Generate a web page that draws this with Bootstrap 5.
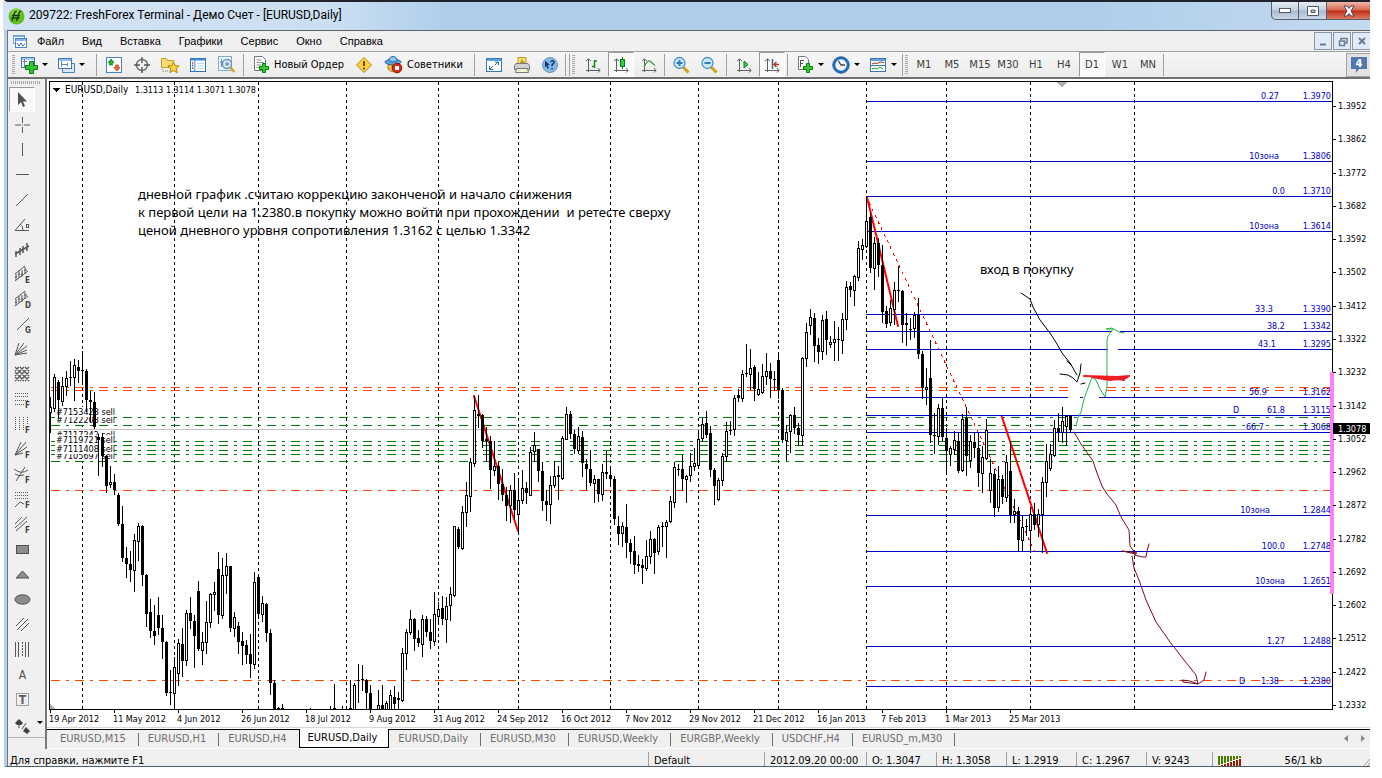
<!DOCTYPE html>
<html lang="ru">
<head>
<meta charset="utf-8">
<meta name="viewport" content="width=device-width, initial-scale=1">
<title>209722: FreshForex Terminal - Демо Счет - [EURUSD,Daily]</title>
<link href="https://cdn.jsdelivr.net/npm/bootstrap@5.3.0/dist/css/bootstrap.min.css" rel="stylesheet">
<style>
  :root { --face:#f0f0f0; --ui:"DejaVu Sans Condensed","DejaVu Sans",sans-serif; }
  body { background:#fff; font-family:var(--ui); font-size:11px; line-height:16px; color:#000; }
  .terminal { margin:0 12px 0 4px; border-top:2px solid #22222c; border-bottom:1px solid #4a5c6c; border-left:3px solid #b2d0ec; background:var(--face); }
  .inner { border-left:1px solid #6a7886; }
  .titlebar { height:28px; margin-left:-4px; padding-left:5px; background:linear-gradient(90deg,#d3e3f4 0,#cbdff2 330px,#b0ceeb 440px,#b0ceeb 80%,#c4daf0 100%); font:12px/27px Roboto,sans-serif; }
  .capbtn { height:18px; width:28px; border:1px solid #56606e; border-top:0; border-left-width:0; border-radius:0; background:linear-gradient(#e4ecf4,#c2d0de 48%,#a9bccf 52%,#c6d8ea); }
  .capbtn:first-child { border-left-width:1px; border-bottom-left-radius:5px; }
  .capbtn.quit { width:43px; border-right:0; background:linear-gradient(#efb6a8,#d8674f 48%,#bf2f16 52%,#dc7a62); }
  .menubar { height:21px; border-top:1px solid #5f6468; }
  .menu-items { margin-left:9px; gap:18px; }
  .menu-items .btn { font:11px/20px "Liberation Sans",sans-serif; padding:0; border:0; border-radius:0; color:#000; }
  .mdibtn { width:18px; height:18px; padding:0 0 0 2px; border:1px solid #8f979e; border-radius:0; background:#dfebf8; line-height:0; }
  .toolbar { height:28px; border-top:1px solid #a0a0a0; border-bottom:2px solid #707070; background:linear-gradient(#f6f6f6,#ececec); }
  .toolbar .btn, .sidebar .btn { padding:0; border:1px solid transparent; border-radius:0; font:11px/16px var(--ui); color:#000; }
  .tool { width:28px; height:25px; }
  .tool-drop { width:37px; height:25px; }
  .tool-text { height:25px; }
  .toolbar .btn.on, .sidebar .btn.on { border-color:#9a9a9a #fff #fff #9a9a9a; background:#f9f9f9; margin:0 1px; width:26px; }
  .toolbar .btn.frame { font-size:10px; color:#404040; font-family:"DejaVu Sans",sans-serif; }
  .rule { width:7px; height:22px; background:linear-gradient(#a0a0a0,#a0a0a0) 3px 0/1px 100% no-repeat; }
  .rule.slim { width:4px; background-position:1px 0; }
  .rule.wide { width:12px; background-position:6px 0; }
  .grip { width:3px; height:20px; background:repeating-linear-gradient(#a8a8a8 0 1px,transparent 1px 2px); }
  .caret { width:0; height:0; border:3px solid transparent; border-top-color:#000; border-bottom:0; }
  .toolbar .btn.news { width:24px; height:24px; border:1px solid #a4a4a4; border-right:0; background:#e2e2e2; }
  .sidebar { width:39px; border-right:2px solid #787878; }
  .sidebar .tool { width:26px; height:25px; margin-left:1px; }
  .sidegrip { height:3px; margin:2px 4px 3px 3px; background:repeating-linear-gradient(90deg,#a8a8a8 0 1px,transparent 1px 2px); }
  .chart { display:block; width:100%; height:auto; background:#fff; shape-rendering:crispEdges; }
  .chart text { font:9px var(--ui); }
  .chart .sym { font-size:10px; }
  .chart .memo { font:13px "Noto Sans",sans-serif; }
  .chart .ink { fill:none; shape-rendering:auto; stroke-linejoin:round; stroke-linecap:round; }
  .sheets { height:20px; border-top:1px solid #000; border-bottom:1px solid #fff; padding-left:4px; }
  .sheets a { color:#6e6e6e; text-decoration:none; line-height:12px; padding:0 12px 0 9px; border-right:1px solid #6e6e6e; margin-top:3px; height:13px; white-space:nowrap; }
  .sheets a.current { color:#000; background:#fff; border:1px solid #000; border-top:0; margin:-1px 0 0 -1px; height:19px; line-height:18px; padding:0 11px 0 8px; }
  .sheets a.before { border-right-color:transparent; }
  .status { height:17px; line-height:18px; padding-top:3px; overflow:hidden; white-space:nowrap; }
  .status > div { border-left:1px solid #a0a0a0; padding-left:5px; height:15px; flex:none; }
  .status > div:first-child { border:0; padding-left:2px; flex:1 1 0; min-width:0; }
  svg.ico { display:block; }
  .c-m { width:116px } .c-l { width:102px } .c-s { width:70px } .c-n { width:66px } .c-e { width:158px }
</style>
</head>
<body>
<main class="terminal">
  <header class="titlebar d-flex align-items-start">
    <svg class="ico align-self-center" width="17" height="17" viewBox="0 0 17 17"><circle cx="8.500" cy="8.500" r="8" fill="#5fbf1c"/><circle cx="8" cy="5" r="5" fill="#9be04e" opacity=".6"/><path d="M4 13 6.500 5q.6-2 2.200-1.500M8.500 13 11 5q.6-2 2.200-1.500M4 7.500h8M3.500 10h8" stroke="#173d07" stroke-width="1.400" fill="none"/></svg>
    <span class="ms-1">209722: FreshForex Terminal - Демо Счет - [EURUSD,Daily]</span>
    <div class="ms-auto d-flex">
      <button class="btn p-0 capbtn" aria-label="Свернуть"><svg class="ico mx-auto" width="14" height="8"><rect x="1.500" y="1.500" width="11" height="4" fill="#fff" stroke="#50586a"/></svg></button>
      <button class="btn p-0 capbtn" aria-label="Развернуть"><svg class="ico mx-auto" width="14" height="12"><path d="M1.500 1.500h11v9h-11zM5 5v2.500h4V5z" fill="#fff" fill-rule="evenodd" stroke="#50586a"/></svg></button>
      <button class="btn p-0 capbtn quit" aria-label="Закрыть"><svg class="ico mx-auto" width="14" height="12"><path d="M2 1h3l2 2.500L9 1h3L9 6l3 5H9L7 8.500 5 11H2l3-5z" fill="#fff" stroke="#50404a"/></svg></button>
    </div>
  </header>
  <div class="inner">
  <nav class="menubar d-flex align-items-center">
    <svg class="ico ms-1" width="16" height="15" viewBox="0 0 16 15"><rect x="1.500" y="1.500" width="11" height="8" fill="#fff" stroke="#6aa0d8"/><path d="M2 2.500h10" stroke="#7fb2e6"/><rect x="3.500" y="4.500" width="11" height="9" fill="#fff" stroke="#4d86c8"/><path d="M4 6h10" stroke="#7fb2e6" stroke-width="2"/><path d="m5 9 2 3 2-3 2 3 2-2" stroke="#3672b8" fill="none"/></svg>
    <div class="d-flex menu-items">
      <button class="btn">Файл</button><button class="btn">Вид</button><button class="btn">Вставка</button><button class="btn">Графики</button><button class="btn">Сервис</button><button class="btn">Окно</button><button class="btn">Справка</button>
    </div>
    <div class="ms-auto d-flex gap-1 align-self-center" style="gap:1px!important">
      <button class="btn mdibtn" aria-label="Свернуть окно"><svg class="ico" width="13" height="13"><path d="M3 9.500h6" stroke="#697c8e" stroke-width="2"/></svg></button>
      <button class="btn mdibtn" aria-label="Восстановить окно"><svg class="ico" width="13" height="13"><path d="M5 5V3.500h6V8H9M3.500 6h5v4.500h-5z" stroke="#697c8e" stroke-width="1.500" fill="none"/></svg></button>
      <button class="btn mdibtn border-end-0" aria-label="Закрыть окно"><svg class="ico" width="13" height="13"><path d="m4 3 6 6M10 3 4 9" stroke="#697c8e" stroke-width="2"/></svg></button>
    </div>
  </nav>
  <div class="toolbar d-flex align-items-center" role="toolbar" aria-label="Панель инструментов">
    <div class="grip ms-1 me-1"></div>
    <button class="btn tool-drop d-flex align-items-center" aria-label="Новый график"><svg class="ico" width="20" height="20" viewBox="0 0 20 20"><rect x="1.500" y="2.500" width="13" height="10" fill="#fff" stroke="#3f78b8"/><path d="M2 4h12" stroke="#a8cdee" stroke-width="2"/><path d="M4.500 4v8M3 6.500h4" stroke="#5a86b0"/><path d="M9.500 6.500h4v4h4v4h-4v4h-4v-4h-4v-4h4z" fill="#2fc62f" stroke="#0b7a12"/></svg><i class="caret" style="margin-left:2px"></i></button>
    <button class="btn tool-drop d-flex align-items-center" aria-label="Профили"><svg class="ico" width="20" height="20" viewBox="0 0 20 20"><path d="M5.500 8.500h12v9h-12z" fill="#d8eafa" stroke="#4a7fbc"/><rect x="1.500" y="3.500" width="13" height="10" fill="#fff" stroke="#3f78b8"/><path d="M2 5h12" stroke="#8fc0ec" stroke-width="2"/><path d="M4.500 6v6M4 9.500h7M10.500 8v3" stroke="#5a86b0"/></svg><i class="caret" style="margin-left:2px"></i></button>
    <div class="rule"></div>
    <button class="btn tool" aria-label="Обзор рынка"><svg class="ico mx-auto" width="18" height="18" viewBox="0 0 18 18"><rect x="1.500" y="1.500" width="15" height="15" fill="#fff" stroke="#3f84cc"/><path d="M6 3 9 6.500H7.500V9h-3V6.500H3z" fill="#26b02c" stroke="#0e7a18" stroke-width=".7"/><path d="m12 15-3-3.500h1.500V9h3v2.500H15z" fill="#ef6a3a" stroke="#b43a12" stroke-width=".7"/></svg></button>
    <button class="btn tool" aria-label="Окно данных"><svg class="ico mx-auto" width="18" height="18" viewBox="0 0 18 18"><circle cx="9" cy="9" r="5.500" fill="none" stroke="#6a6a6a" stroke-width="1.400"/><path d="M9 1v6M9 11v6M1 9h6M11 9h6" stroke="#555" stroke-width="1.400"/></svg></button>
    <button class="btn tool" aria-label="Навигатор"><svg class="ico mx-auto" width="20" height="20" viewBox="0 0 20 20"><path d="M1.500 3.500h5l1 2h6v7h-12z" fill="#fbdc74" stroke="#c09a28"/><path d="M3 14v3M5 16h4" stroke="#777" stroke-dasharray="1 1"/><path d="m13.500 7 1.700 3.600 4 .4-3 2.600 1 4-3.700-2-3.600 2 1-4-3-2.600 4-.4z" fill="#ffd23c" stroke="#b8820a"/></svg></button>
    <button class="btn tool" aria-label="Терминал"><svg class="ico mx-auto" width="18" height="18" viewBox="0 0 18 18"><rect x="1.500" y="2.500" width="15" height="13" fill="#fff" stroke="#2f74be"/><path d="M2 3.500h14" stroke="#3b87d8" stroke-width="2"/><path d="M5.500 4v11" stroke="#80b5e5" stroke-width="2"/><path d="M3 7h1M3 9.500h1M3 12h1" stroke="#d03030" stroke-width="1.500"/><path d="M8 7.500h7M8 10h7M8 12.500h7" stroke="#b9d4ee"/></svg></button>
    <button class="btn tool" aria-label="Тестер стратегий"><svg class="ico mx-auto" width="19" height="19" viewBox="0 0 19 19"><rect x="1.500" y="1.500" width="13" height="14" fill="#edf5fc" stroke="#7faad4"/><path d="M4.500 4v8M3 7h3M12 4v5" stroke="#5d87b2"/><circle cx="10" cy="9" r="4.500" fill="#d3e8f8" stroke="#6d92b8" stroke-width="1.300"/><path d="M10 7v4M8 9h4" stroke="#777"/><path d="m13.500 12.500 4 4.500" stroke="#d9a520" stroke-width="2.500"/></svg></button>
    <div class="rule"></div>
    <button class="btn d-flex align-items-center px-1 tool-text"><svg class="ico me-1" width="18" height="19" viewBox="0 0 18 19"><path d="M2.500 1.500h8l3 3v11h-11z" fill="#fff" stroke="#777"/><path d="M4.500 5h5M4.500 7.500h7M4.500 10h5M4.500 12.500h3" stroke="#888"/><path d="M10.500 8.500h3v3h3v3h-3v3h-3v-3h-3v-3h3z" fill="#32cb32" stroke="#0b7a12"/></svg>Новый Ордер</button>
    <button class="btn tool" aria-label="MetaEditor" style="width:30px"><svg class="ico mx-auto" width="18" height="18" viewBox="0 0 18 18"><path d="m9 1.500 7.500 7.500L9 16.500 1.500 9z" fill="#fbd142" stroke="#b8860b" stroke-linejoin="round"/><path d="M9 5v5M9 11.500v2" stroke="#7a4d00" stroke-width="2"/></svg></button>
    <button class="btn d-flex align-items-center px-1 tool-text"><svg class="ico me-1" width="19" height="19" viewBox="0 0 19 19"><path d="M4 8q5 5 9 0l-1 7-4 2-4-3z" fill="#f6c23c" stroke="#b07d10"/><ellipse cx="9" cy="7" rx="8" ry="2.800" fill="#5fa6de" stroke="#2c6ca8"/><path d="M5 6q0-4.500 4-4.500T13 6q-4 2-8 0" fill="#8cc4ee" stroke="#2c6ca8"/><circle cx="13" cy="13" r="4.800" fill="#d92b1c" stroke="#8c1409"/><rect x="11" y="11" width="4" height="4" fill="#fff"/></svg>Советники</button>
    <div class="rule wide"></div>
    <button class="btn tool" aria-label="Полный экран"><svg class="ico mx-auto" width="18" height="18" viewBox="0 0 18 18"><rect x="1.500" y="2.500" width="15" height="13" fill="#fff" stroke="#3777b8"/><path d="M2 4h14" stroke="#5e9fe0" stroke-width="2"/><path d="m5 13 3-3M10 9l3-3M4.500 10v3.500H8M10 6h3.500v3" stroke="#2b68a8" fill="none"/></svg></button>
    <button class="btn tool" aria-label="Печать"><svg class="ico mx-auto" width="18" height="18" viewBox="0 0 18 18"><path d="M5 1.500h8v7H5z" fill="#ffe672" stroke="#b89430"/><path d="M9 3v4M7 6h5" stroke="#a17a12"/><path d="M1.500 9.500 3 7.500h12l1.500 2v4h-15z" fill="#d0d0d0" stroke="#777"/><path d="M3.500 12.500h11l1 4h-13z" fill="#eef3d8" stroke="#777"/></svg></button>
    <button class="btn tool" aria-label="Справка по контексту"><svg class="ico mx-auto" width="18" height="18" viewBox="0 0 18 18"><circle cx="9" cy="9" r="7.500" fill="#85b7e7" stroke="#6a94c0"/><path d="M4 4.500 9 9l-2.500.2L8 12l-1.500.8L5.300 10 4 11.500z" fill="#143a72"/><path d="M9.500 6q2-2 3.300-.6 1 1.600-1.700 3.300v1.500M11 12v1.500" stroke="#143a72" stroke-width="1.500" fill="none"/></svg></button>
    <div class="rule slim"></div><div class="rule slim"></div>
    <div class="grip me-1"></div>
    <button class="btn tool" aria-label="Бары"><svg class="ico mx-auto" width="18" height="18" viewBox="0 0 18 18"><path d="M4.500 3v13M2 5l2.500-2L7 5M2 14.500h14M14 12l2 2.500-2 2" stroke="#606060" fill="none"/><path d="M10.500 4v8M8 10.500h2.500M10.500 5H13" stroke="#148a1e" stroke-width="1.500"/></svg></button>
    <button class="btn tool on" aria-label="Японские свечи"><svg class="ico mx-auto" width="18" height="18" viewBox="0 0 18 18"><path d="M4.500 3v13M2 5l2.500-2L7 5M2 14.500h14M14 12l2 2.500-2 2" stroke="#606060" fill="none"/><path d="M10.500 1v12" stroke="#0d7c16"/><rect x="8.500" y="3.500" width="4" height="7" fill="#32d03a" stroke="#0d7c16"/></svg></button>
    <button class="btn tool" aria-label="Линия"><svg class="ico mx-auto" width="18" height="18" viewBox="0 0 18 18"><path d="M4.500 3v13M2 5l2.500-2L7 5M2 14.500h14M14 12l2 2.500-2 2" stroke="#606060" fill="none"/><path d="M4 11q4-8 6.500-5.500L15 9.500" stroke="#38a040" stroke-width="1.300" fill="none"/></svg></button>
    <div class="rule slim"></div>
    <button class="btn tool" aria-label="Увеличить"><svg class="ico mx-auto" width="18" height="18" viewBox="0 0 18 18"><path d="m11 11 5.500 5.500" stroke="#d3a012" stroke-width="3"/><circle cx="7.500" cy="7" r="5.500" fill="#cbe8fa" stroke="#4a93cc" stroke-width="1.300"/><path d="M7.500 4v6M4.500 7h6" stroke="#2e7bb8" stroke-width="2"/></svg></button>
    <button class="btn tool" aria-label="Уменьшить"><svg class="ico mx-auto" width="18" height="18" viewBox="0 0 18 18"><path d="m11 11 5.500 5.500" stroke="#d3a012" stroke-width="3"/><circle cx="7.500" cy="7" r="5.500" fill="#cbe8fa" stroke="#4a93cc" stroke-width="1.300"/><path d="M4.500 7h6" stroke="#2e7bb8" stroke-width="2"/></svg></button>
    <div class="rule"></div>
    <button class="btn tool" aria-label="Автопрокрутка"><svg class="ico mx-auto" width="18" height="18" viewBox="0 0 18 18"><path d="M4.500 3v13M2 5l2.500-2L7 5M2 14.500h14M14 12l2 2.500-2 2" stroke="#606060" fill="none"/><path d="M9 5v7l4-3.500z" fill="#3bd042" stroke="#0d7c16"/></svg></button>
    <button class="btn tool on" aria-label="Сдвиг графика"><svg class="ico mx-auto" width="18" height="18" viewBox="0 0 18 18"><path d="M4.500 3v13M2 5l2.500-2L7 5M2 14.500h14M14 12l2 2.500-2 2" stroke="#606060" fill="none"/><path d="M9.500 3v10" stroke="#266a9e" stroke-width="1.500"/><path d="M16 8.500h-5M13.500 6 11 8.500l2.500 2.500" stroke="#b83a12" stroke-width="1.500" fill="none"/></svg></button>
    <div class="rule slim"></div>
    <button class="btn tool-drop d-flex align-items-center" aria-label="Индикаторы"><svg class="ico ms-1" width="19" height="19" viewBox="0 0 19 19"><path d="M3.500 1.500h7l3 3v10h-10z" fill="#fff" stroke="#777"/><path d="M5.500 12V5M5 5.500h4M5 8.500h3" stroke="#555"/><path d="M11.500 8.500h3v3h3v3h-3v3h-3v-3h-3v-3h3z" fill="#32cb32" stroke="#0b7a12"/></svg><i class="caret ms-1"></i></button>
    <button class="btn tool-drop d-flex align-items-center" aria-label="Периоды"><svg class="ico ms-1" width="18" height="18" viewBox="0 0 18 18"><circle cx="9" cy="9" r="7" fill="#eef6fc" stroke="#1e6fc4" stroke-width="2.500"/><circle cx="9" cy="9" r="8.300" fill="none" stroke="#0e4684" stroke-width=".7"/><path d="M6.500 5 9 9h4" stroke="#444" stroke-width="1.300" fill="none"/></svg><i class="caret ms-1"></i></button>
    <button class="btn tool-drop d-flex align-items-center" aria-label="Шаблоны"><svg class="ico ms-1" width="18" height="18" viewBox="0 0 18 18"><rect x="1.500" y="2.500" width="15" height="13" fill="#fff" stroke="#3777b8"/><path d="M2 4h14" stroke="#5e9fe0" stroke-width="2"/><path d="M1.500 9.500h15" stroke="#3777b8"/><path d="m3 8 3-1 2 .5L11 6l4 .5" stroke="#a03010" fill="none"/><path d="m3 13 3-1 2 1 3-2 3 2" stroke="#2a9030" fill="none"/></svg><i class="caret ms-1"></i></button>
    <div class="rule slim"></div>
    <div class="grip"></div>
    <button class="btn tool frame ms-1" style="margin-left:2px!important">M1</button><button class="btn tool frame">M5</button><button class="btn tool frame">M15</button><button class="btn tool frame">M30</button><button class="btn tool frame">H1</button><button class="btn tool frame">H4</button><button class="btn tool frame on">D1</button><button class="btn tool frame">W1</button><button class="btn tool frame">MN</button>
    <div class="rule slim"></div>
    <button class="btn news ms-auto" aria-label="Сообщения: 4"><svg class="ico mx-auto" width="18" height="18" viewBox="0 0 18 18"><path d="M1 1h16v12H9l-3 4v-4H1z" fill="#5277ad"/><text x="9" y="11" text-anchor="middle" font-size="11" font-weight="bold" fill="#fff">4</text></svg></button>
  </div>

  <div class="d-flex">
    <aside class="sidebar flex-shrink-0" id="sidebar"><div class="sidegrip"></div></aside>
    <section class="flex-grow-1" style="min-width:0">
      <svg class="chart" id="chart" viewBox="47 79 1323 650" role="img" aria-label="EURUSD,Daily"></svg>
      <nav class="sheets d-flex">
        <a href="#">EURUSD,M15</a><a href="#">EURUSD,H1</a><a href="#" class="before">EURUSD,H4</a><a href="#" class="current" aria-current="page">EURUSD,Daily</a><a href="#">EURUSD,Daily</a><a href="#">EURUSD,M30</a><a href="#">EURUSD,Weekly</a><a href="#">EURGBP,Weekly</a><a href="#">USDCHF,H4</a><a href="#">EURUSD_m,M30</a>
        <svg class="ms-auto me-1 align-self-center flex-shrink-0" width="22" height="8"><path d="M4 0v7L0 3.500zM17 0v7l4-3.500z" fill="#8c8c8c"/></svg>
      </nav>
    </section>
  </div>
  <footer class="status d-flex">
    <div>Для справки, нажмите F1</div>
    <div class="c-m">Default</div><div class="c-l">2012.09.20 00:00</div><div class="c-s">O: 1.3047</div><div class="c-s">H: 1.3058</div><div class="c-s">L: 1.2919</div><div class="c-s">C: 1.2967</div><div class="c-n">V: 9243</div>
    <div class="c-e d-flex"><svg width="24" height="12" class="mt-1" id="meter"></svg><span class="ms-auto me-4 pe-4">56/1 kb</span><svg width="8" height="12" class="mt-1" style="margin-left:-8px"><path d="m0 12 8-9M4 12l4-5" stroke="#999"/></svg></div>
  </footer>
  </div>
</main>

<script src="https://cdn.jsdelivr.net/npm/bootstrap@5.3.0/dist/js/bootstrap.bundle.min.js"></script>
<script>
// ---- drawing tools column ----
const G = 'stroke="#585858" fill="none"';
const F = t => `<text x="12" y="18" font-size="8" fill="#444" font-weight="bold">${t}</text>`;
const bars = '<path d="M3 15V9M6 13V6M9 12V5M12 9V2M2 12h2M5 9h2M8 9h2M11 5h3"';
const tools = [
 ['Курсор','<path d="M5 2v13l3-3 2 5 2-1-2-4.500h4z" fill="#505050"/>'],
 ['Перекрестие',`<path d="M9.500 2v6M9.500 12v6M2 10h6M11 10h6" ${G}/><path d="M9 10h1" ${G}/>`],
 ['Вертикальная линия',`<path d="M9.500 3v13" ${G}/>`],
 ['Горизонтальная линия',`<path d="M3 9.500h13" ${G}/>`],
 ['Трендовая линия',`<path d="M3 16 15 4" ${G}/>`],
 ['Линия по углу',`<path d="M12 4 2 15.500h14M7 9q3 2 3 6" ${G}/><rect x="13.500" y="9.500" width="2" height="3" ${G}/>`],
 ['Циклы тренда',`<path d="M3 17v-6M7 15V8M10 13V6M14 11V3M2 14l14-8" ${G} stroke-width="1.500"/>`],
 ['Канал E',`${bars} ${G}/><path d="M2 9 12 1M2 16 15 6" ${G}/>${F('E')}`],
 ['Канал D',`${bars} ${G}/><path d="M2 9 12 1M2 16 15 6" ${G}/>${F('D')}`],
 ['Линия Ганна',`<path d="M4 15 16 3" ${G}/>${F('G')}`],
 ['Веер Ганна',`<path d="M2 15 6 3M2 15 11 3M2 15 14 6M2 15l12-5M2 15l12-2" ${G}/>`],
 ['Сетка Ганна',`<path d="m2 6 4-4M2 11l9-9M2 16 16 2M7 16l9-9M12 16l4-4M2 12l4 4M2 7l9 9M2 2l14 14M7 2l9 9M12 2l4 4" ${G} stroke-width="1.300"/>`],
 ['Линии Фибоначчи',`<path d="M2 3.500h13M2 6.500h13M2 10.500h13M2 14.500h9" ${G} stroke-dasharray="1 1"/>${F('F')}`],
 ['Временные зоны Фибоначчи',`<path d="M2.500 2v14M6.500 2v14M10.500 2v14M14.500 2v8" ${G} stroke-dasharray="1 1"/>${F('F')}`],
 ['Веер Фибоначчи',`<path d="M2 15 8 2M2 15 13 2M2 15l12-8M2 15l8-2" ${G}/>${F('F')}`],
 ['Дуги Фибоначчи',`<path d="M3 16 12 2M1 4q7 6 14 1M2 9q4 3 9 1" ${G}/>${F('F')}`],
 ['Расширение Фибоначчи',`<path d="M2 2.500h14M2 5.500h14M2 8.500h14" ${G} stroke-dasharray="1 1"/><path d="m2 17 5-5 4 2" ${G}/>${F('F')}`],
 ['Канал Фибоначчи',`<path d="M2 9 9 2M2 13 14 2M3 16 14 6" ${G}/>${F('F')}`],
 ['Прямоугольник','<rect x="3.500" y="5.500" width="12" height="8" fill="#8c8c8c" stroke="#505050"/>'],
 ['Треугольник','<path d="m3 13 6.500-7 6.500 7z" fill="#8c8c8c" stroke="#505050"/>'],
 ['Эллипс','<ellipse cx="9.500" cy="9.500" rx="7.500" ry="4.700" fill="#8c8c8c" stroke="#505050"/>'],
 ['Равноудалённый канал',`<path d="m3 11 8-8M4 15 15 4M8 16l8-8" ${G}/>`],
 ['Циклические линии',`<path d="M2.500 2v15M5.500 2v15M12.500 2v15M15.500 2v15" ${G}/><path d="M9.500 2v15" ${G} stroke-dasharray="2 1"/>`],
 ['Текст','<text x="9.500" y="14" text-anchor="middle" font-size="12" fill="#505050">A</text>'],
 ['Текстовая метка','<rect x="3.500" y="3.500" width="12" height="12" fill="none" stroke="#505050" stroke-dasharray="1 1"/><text x="9.500" y="14" text-anchor="middle" font-size="12" font-weight="bold" fill="#606060">T</text>'],
 ['Стрелки','<path d="m5 2 4 4-2 2H3L1 6zM12 10l4 4-3 3-4-3z" fill="#404040"/><path d="m8 12 4-6M5 8v3" stroke="#505050"/>']
];
document.getElementById('sidebar').insertAdjacentHTML('beforeend', tools.map(([n,s],i) =>
 `<button class="btn tool d-${i==25?'flex w-100':'block'} ${i?'':'on'}" aria-label="${n}"><svg class="ico ${i==25?'ms-1 mt-1':'mx-auto'}" width="19" height="19" viewBox="0 0 19 19">${s}</svg>${i==25?'<i class="caret ms-1 mt-2"></i>':''}</button>`).join('') + '<hr class="m-0">');

// ---- chart ----
// Each group: first bar x, top offset, then "kind high top bottom low" in thirds of a unit; kind w = rising, b = falling.
const series = [
[50,340,`w 172 203 218 278,w 102 112 205 213,b 120 126 182 233,w 112 139 184 196,w 93 115 139 165,b 63 112 116 135,w 57 76 113 182,b 60 82 93 126,b 34 91 95 131,b 87 93 182 215,b 153 181 188 245,b 157 187 263 266,b 283 292 302 406,b 280 293 350 378,b 345 348 438 456,w 378 427 434 442,b 402 427 450 462,b 459 465 553 555,b 500 552 656 665,b 621 655 672 711,b 633 672 692 724,w 583 601 692 755,w 549 559 604 662,b 556 559 707 735,b 702 705 822 860,b 777 816 875 893,b 796 873 890 914,b 771 825 866 884,b 825 866 908 956,b 903 907 1061 1065,b 990 1057 1061 1092,w 951 982 1061 1107,w 897 910 1001 1037,b 864 912 965 1010,w 812 820 962 977,b 771 820 845 866,b 825 843 890 983,b 723 753 929 932,w 876 907 932 974,w 785 847 908 941,w 759 763 848 863,w 726 757 764 810,b 636 687 827 849,w 654 706 827 836,w 639 679 707 759,b 678 679 866 875,w 816 832 866 890,b 846 858 908 941,b 876 904 920 974,b 900 915 947 971,b 882 943 974 1013,w 697 727 974 986,b 708 712 824 836,w 768 790 824 845,b 789 793 881 903,b 867 880 1031 1062,b 1020 1029 1107 1107`],
[278,340,'b 1103 1104 1107 1107,b 1092 1104 1107 1107'],
[310,340,'b 1104 1107 1107 1107'],
[330,340,'b 1098 1107 1107 1107,b 1032 1104 1107 1107'],
[342,340,'b 1098 1107 1107 1107'],
[350,340,'b 1020 1104 1107 1107,w 1029 1035 1109 1107,b 972 1021 1025 1086,b 975 1017 1021 1050,b 1017 1022 1061 1104,b 1035 1060 1107 1107'],
[378,340,'w 1050 1096 1109 1107,b 1035 1096 1107 1107,w 1083 1090 1109 1107,w 1050 1067 1109 1107,b 1038 1071 1094 1107,b 1056 1074 1082 1107,w 924 940 1082 1085,w 867 877 941 987,w 810 838 878 884,b 834 838 899 932,b 870 895 911 920,w 825 838 914 950,b 828 838 878 890,b 837 877 905 926,w 756 823 905 917,w 786 808 830 849,b 768 804 839 852,w 771 799 839 908,w 741 763 797 842,w 559 559 767 770,b 561 567 623 626,w 498 517 626 629,w 426 466 518 560,w 354 367 470 515,w 168 211 371 380,b 165 222 228 263,b 222 226 304 322,b 262 299 305 365,b 290 304 391 446,w 304 379 392 406,b 366 378 434 479,b 387 432 467 482,b 441 465 500 540,w 435 451 497 548,b 399 451 512 536,w 423 481 523 577,w 390 445 482 491,b 426 445 461 491,w 321 337 467 467,w 276 316 335 365,b 327 328 393 425,b 366 393 485 512,b 450 483 497 540,w 408 436 493 551,w 363 409 437 443,b 378 405 413 479,w 288 295 416 419,w 201 223 298 299,b 213 223 284 296,b 270 283 328 341,w 261 289 331 340,b 273 291 371 410,b 357 372 387 447,b 330 387 431 437,w 405 418 431 488,b 417 418 464 485,w 372 397 464 482,b 333 396 404 416,b 378 405 419 437,b 408 418 539 554,b 528 558 584 614,w 546 559 581 620,b 492 561 611 651,b 598 609 638 671,b 588 633 677 701,b 645 672 680 693,b 657 675 686 731,w 600 649 686 690,w 573 598 650 671,b 594 598 641 701,w 555 562 635 644,b 546 558 563 618,w 540 546 560 651,w 469 484 545 548,w 366 382 488 503,b 372 387 391 406,b 345 387 419 450,w 405 409 419 488,w 340 379 407 425,w 324 370 380 392,w 270 298 377 383,w 234 253 296 305,b 213 249 285 291,b 258 279 392 410,b 384 390 440 494,w 415 421 479 482,w 340 349 421 437,w 246 274 349 363'],
[730,180,'b 723 751 755 763,w 645 656 749 765,b 627 645 656 663,w 570 583 656 663,b 492 581 584 590,w 507 565 584 627,b 555 562 629 661,w 576 627 643 646,w 552 589 638 641,w 519 574 590 612,b 549 573 597 653,b 573 597 602 630,b 516 541 632 656,b 625 630 782 786,w 735 757 781 840,w 702 706 755 818,b 681 705 745 760,b 729 744 766 797,w 531 536 767 795,w 429 457 536 560,w 387 412 437 464,b 399 414 500 543,b 474 495 518 551,w 405 421 514 539,b 393 418 482 524,w 468 487 494 503,w 423 478 487 542,b 441 478 482 542,w 399 418 482 521,w 303 322 419 449,b 306 318 332 350,w 285 289 332 377,w 183 205 293 302,w 177 196 209 237,w 48 124 199 201,b 99 112 265 278,w 171 190 265 329,b 174 190 257 290,b 195 256 398 427,b 378 393 434 443,w 360 384 428 437,w 306 332 388 434,b 258 330 334 365,b 330 334 437 488,b 399 430 437 497,b 414 447 450 479,w 396 405 446 473,b 354 405 523 536,b 513 522 626 656,w 564 621 629 674,b 480 595 766 786,b 699 766 770 819,w 672 685 770 792,b 651 684 773 780,b 744 774 815 882,w 800 805 823 857,w 753 780 808 824,b 756 785 875 876,w 702 718 871 873,b 681 714 829 887,w 765 784 841 861,b 756 786 806 832,b 756 805 881 920,w 798 832 881 936,w 717 751 835 837,w 837 880 932 968,b 868 882 984 1010,w 858 898 983 995,b 885 898 953 971,w 825 847 953 963,b 786 874 1005 1026,w 957 993 1003 1028,b 981 994 1082 1114,w 1008 1042 1082 1110,b 1017 1038 1041 1065,w 981 1003 1052 1115,b 969 1003 1036 1049,w 987 1003 1034 1070,w 891 907 1003 1118,w 792 844 907 948,w 792 822 865 872,w 720 745 826 829,b 699 745 757 784,w 681 724 757 788,w 705 709 738 797,b 705 708 750 757']
];
let s = '';
const H = (y,x1,x2,c,d='') => s += `<path d="M${x1} ${y+.5}H${x2}" stroke="${c}" ${d?`stroke-dasharray="${d}"`:''}/>`;
const box = (x,y,w,h,c) => s += `<rect x="${x}" y="${y}" width="${w}" height="${h}" fill="${c}"/>`;
const T = (x,y,t,c='#000',a='start',k='') => s += `<text x="${x}" y="${y}" fill="${c}" text-anchor="${a}" class="${k}">${t}</text>`;

for (const x of [82,174,258,346,438,518,610,698,778,866,946,1030,1134]) s += `<path d="M${x+.5} 82V709" stroke="#000" stroke-dasharray="3 3"/>`;
H(429,50,1332,'#c0c0c0');
for (const y of [387,390,490,680]) H(y,51,1330,'#ff4500','9 6 3 6');
for (const y of [417,425,441,445,450,454,461]) H(y,51,1330,'#008000','9 6 3 6');
const levels = [[101,'0.27',1279,'1.3970'],[161,'10зона',1279,'1.3806'],[196,'0.0',1285,'1.3710'],[231,'10зона',1279,'1.3614'],[314,'33.3',1273,'1.3390'],[331,'38.2',1285,'1.3342'],[349,'43.1',1276,'1.3295'],[397,'56.9',1267,'1.3162'],[415,'61.8',1285,'1.3115'],[432,'66.7',1264,'1.3068'],[515,'10зона',1270,'1.2844'],[551,'100.0',1285,'1.2748'],[586,'10зона',1285,'1.2651'],[646,'1.27',1285,'1.2488'],[686,'1.38',1279,'1.2380']];
for (const [y,n,x,p] of levels) { box(866,y,466,1,'#0000cd'); T(x,y-2,n,'#0000c8','end'); T(1331,y-2,p,'#0000c8','end'); }
T(1233,413,'D','#0000c8'); T(1239,684,'D','#0000c8');
// areas painted over before the hand drawing
box(1068,385,38,7,'#fff'); box(1068,396,12,3,'#fff'); box(1083,396,16,3,'#fff'); box(1112,330,8,3,'#fff'); box(1108,348,10,3,'#fff');
for (const [y,n] of [[423,'7122203'],[415,'7153423'],[438,'7117242'],[443,'7119721'],[459,'7105697'],[452,'7111408']]) { box(55,y-8,59,10,'#fff'); T(56,y,`#${n} sell`); }
s += '<g stroke="#f00" stroke-width="2" class="ink"><path d="m867 197 31 129M474 396l44 135M1002 417l45 136"/></g><path d="m866 196 169 356" stroke="#f00" stroke-dasharray="3 4"/>';
for (const [x0,y0,rows] of series) rows.split(',').forEach((r,i) => {
  const [k,...v] = r.split(' '), [h,t,b,l] = v.map(n => Math.min(y0 + Math.floor(n/3), 709)), x = x0 + 4*i;
  box(x,h,1,l-h+1,'#000');
  if (k === 'b') box(x-1,t,3,Math.max(b-t,1),'#000');
  else { box(x-1,t,3,b-t+1,'#000'); if (b-t > 1) box(x,t+1,1,b-t-1,'#fff'); }
});
s += `<g class="ink" stroke-width="1"><g stroke="#000"><path d="m1021 293 9 6 3 8 7 13 10 13 7 11 5 9 8 10 7 12M1060 374l8 1 5 3 4 4 3-9 1-9M1067 361l4 4M1081 384l4-1"/></g>
<path d="m1076 426 2-8 3-6 3-13 8-22 4 3 4 9 5 8 2-10v-47l1-4 5-7h-7l6-1 7 4 5 1" stroke="#22b14c"/>
<path d="m1084 376 33 1 12-1-3 2-16 2-18-3 20 1 12 2" stroke="#ed1c24" stroke-width="2"/>
<path d="m1074 432 7 12 12 17 4 12 5 13 5 8 9 11 5 12 8 13 1 16 6 8-14-3 15 2-3 2 9 2h3l1-6 2-7M1132 556l2 12 5 12 7 20 10 22 14 20 14 18 12 15 2 9-15-2-1-2 8 1 8 3 6-4 2-8" stroke="#7a0a20"/></g>`;
box(49,81,1284,1,'#000'); box(49,81,1,629,'#000'); box(1332,81,1,629,'#000'); box(49,709,1284,1,'#000');
s += '<path d="M1056 82h11l-5 5zM50 709v-5l5 5z" fill="#b0b0b0"/><path d="M53 88h7l-3.500 4z"/>';
box(1330,372,4,222,'#ff80ff');
for (let i = 0; i < 19; i++) { const y = Math.round(106 + 33.28*i); box(1333,y,3,1,'#000'); T(1338,y+3,(1.3952 - .009*i).toFixed(4)); }
box(1333,423,37,11,'#000'); T(1338,432,'1.3078','#fff');
['19 Apr 2012','11 May 2012','4 Jun 2012','26 Jun 2012','18 Jul 2012','9 Aug 2012','31 Aug 2012','24 Sep 2012','16 Oct 2012','7 Nov 2012','29 Nov 2012','21 Dec 2012','16 Jan 2013','7 Feb 2013','1 Mar 2013','25 Mar 2013'].forEach((d,i) => { box(50+64*i,710,1,3,'#000'); T(49+64*i,722,d); });
T(65,93,'EURUSD,Daily','#000','start','sym'); T(135,93,'1.3113 1.3114 1.3071 1.3078');
T(138,199,'дневной график .считаю коррекцию законченой и начало снижения','#000','start','memo');
T(138,217,'к первой цели на 1.2380.в покупку можно войти при прохождении&#160; и ретесте сверху','#000','start','memo');
T(138,235,'ценой дневного уровня сопротивления 1.3162 с целью 1.3342','#000','start','memo');
T(980,274,'вход в покупку','#000','start','memo');
box(47,727,1323,1,'#d8d8d8');
document.getElementById('chart').innerHTML = s;
document.getElementById('meter').innerHTML = Array.from({length:8}, (_,i) => `<path d="M${i*3+1} 0V${9-i}" stroke="#4e7a00" stroke-width="2"/><path d="M${i*3+1} ${10-i}V12" stroke="#9c1c00" stroke-width="2"/>`).join('');
</script>
</body>
</html>
